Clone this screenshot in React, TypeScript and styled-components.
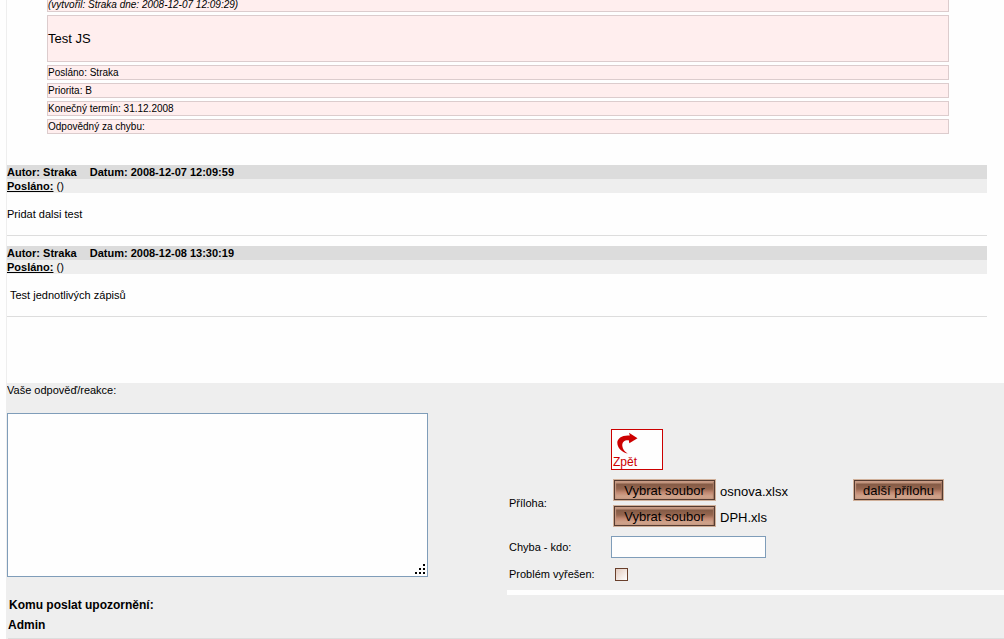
import React from "react";
import styled, { createGlobalStyle } from "styled-components";

const GlobalStyle = createGlobalStyle`
  * { box-sizing: border-box; }
  body {
    margin: 0;
    background: #fefefe;
    color: #000;
    font: 11px/14px "Liberation Sans", Arial, sans-serif;
  }
  button, input, textarea { font: inherit; color: inherit; }
`;

const Page = styled.main`
  margin-left: 6px;
  border-left: 1px solid #eee;
  overflow: hidden;
`;

const Details = styled.section`
  display: flex;
  flex-direction: column;
  gap: 3px;
  margin: -3px 55px 31px 40px;
`;

const DetailBox = styled.div<{ $tall?: boolean; $italic?: boolean }>`
  display: flex;
  align-items: center;
  height: ${(p) => (p.$tall ? 47 : 15)}px;
  border: 1px solid #dccccd;
  background: #ffeeee;
  font-size: ${(p) => (p.$tall ? 13 : 10)}px;
  font-style: ${(p) => (p.$italic ? "italic" : "normal")};
  white-space: pre;
`;

const Entry = styled.article`
  margin: 0 17px 10px 0;
  border-bottom: 1px solid #ddd;
`;

const EntryHead = styled.h2`
  display: flex;
  gap: 13px;
  margin: 0;
  background: #dcdcdc;
  font-size: 11px;
  line-height: 14px;
`;

const Recipients = styled.div`
  background: #eee;
  b { text-decoration: underline; }
`;

const EntryText = styled.p<{ $indent?: boolean }>`
  margin: 0;
  padding: 14px 0 14px ${(p) => (p.$indent ? 3 : 0)}px;
`;

const Form = styled.form`
  margin-top: 66px;
  background: #eee;
`;

const ReplyLabel = styled.label`
  display: block;
  padding-bottom: 16px;
`;

const FormColumns = styled.div`
  display: grid;
  grid-template-columns: 500px 1fr;
`;

const ReplyWrap = styled.div`
  position: relative;
  width: 421px;
  height: 164px;
`;

const Reply = styled.textarea`
  display: block;
  width: 100%;
  height: 100%;
  border: 1px solid #7f9db9;
  border-radius: 0;
  background: #fefefe;
  resize: none;
`;

const Grip = styled.svg`
  position: absolute;
  right: 3px;
  bottom: 3px;
  pointer-events: none;
`;

const Fields = styled.div`
  display: grid;
  grid-template-columns: 102px 1fr;
  row-gap: 9px;
  align-items: center;
  padding: 16px 0 9px 2px;
`;

const BackButton = styled.button`
  grid-column: 2;
  display: flex;
  flex-direction: column;
  justify-content: space-between;
  align-items: flex-start;
  width: 52px;
  height: 41px;
  padding: 2px 0 0 1px;
  border: 1px solid #c00;
  background: #fefefe;
  color: #c00;
  font-size: 12px;
  line-height: 14px;
  svg { margin-left: 3px; }
`;

const Attachments = styled.div`
  display: grid;
  grid-template-columns: 240px 1fr;
  align-items: start;
  padding-left: 2px;
`;

const FileList = styled.div`
  display: flex;
  flex-direction: column;
  gap: 4px;
`;

const FileRow = styled.div`
  display: flex;
  gap: 4px;
  font-size: 13px;
  line-height: 26px;
  height: 22px;
`;

const CopperButton = styled.button<{ $width: number }>`
  width: ${(p) => p.$width}px;
  height: 22px;
  padding: 1px 0 0;
  border: 1px solid #d0b09a;
  background: linear-gradient(#c39780 0, #c39780 12%, #855b46 22%, #96664f 45%, #c08770 62%, #cfa28a 80%, #c99d86 100%);
  box-shadow: inset 0 0 0 1px #553b30, inset 2px 2px 1px #c89b84, inset -2px -1px 1px #a57863;
  font-size: 13px;
  line-height: 19px;
  white-space: nowrap;
`;

const TextField = styled.input`
  width: 155px;
  height: 22px;
  border: 1px solid #7f9db9;
  background: #fefefe;
`;

const Check = styled.input`
  appearance: none;
  width: 13px;
  height: 13px;
  margin: 1px 0 0 4px;
  border: 1px solid #693f2b;
  background: linear-gradient(135deg, #e3cbbf, #fff);
`;

const Divider = styled.hr`
  height: 5px;
  margin: 0;
  border: 0;
  background: #fefefe;
`;

const Notify = styled.section`
  padding-top: 2px;
  border-bottom: 1px solid #ddd;
  margin-left: 1px;
`;

const NotifyLine = styled.h3<{ $title?: boolean }>`
  margin: 0;
  padding-left: ${(p) => (p.$title ? 1 : 0)}px;
  font-size: 12px;
  line-height: ${(p) => (p.$title ? 16 : 25)}px;
`;

const details = ["Posláno: Straka", "Priorita: B", "Konečný termín: 31.12.2008", "Odpovědný za chybu:"];

const entries = [
  { date: "2008-12-07 12:09:59", text: "Pridat dalsi test", indent: false },
  { date: "2008-12-08 13:30:19", text: "Test jednotlivých zápisů", indent: true },
];

export default function App() {
  return (
    <Page>
      <GlobalStyle />
      <Details>
        <DetailBox $italic>(vytvořil: Straka dne: 2008-12-07 12:09:29)</DetailBox>
        <DetailBox $tall>Test JS</DetailBox>
        {details.map((d) => (
          <DetailBox key={d}>{d}</DetailBox>
        ))}
      </Details>
      {entries.map((e) => (
        <Entry key={e.date}>
          <EntryHead>
            <span>Autor: Straka</span>
            <span>Datum: {e.date}</span>
          </EntryHead>
          <Recipients>
            <b>Posláno:</b> ()
          </Recipients>
          <EntryText $indent={e.indent}>{e.text}</EntryText>
        </Entry>
      ))}
      <Form onSubmit={(e) => e.preventDefault()}>
        <ReplyLabel htmlFor="reply">Vaše odpověď/reakce:</ReplyLabel>
        <FormColumns>
          <ReplyWrap>
            <Reply id="reply" />
            <Grip width="10" height="10" shapeRendering="crispEdges">
              <path d="M8 0h2v2h-2zM4 4h2v2h-2zM8 4h2v2h-2zM0 8h2v2h-2zM4 8h2v2h-2zM8 8h2v2h-2z" />
            </Grip>
          </ReplyWrap>
          <div>
            <Fields>
              <BackButton type="button">
                <svg width="24" height="23" viewBox="0 0 24 23" aria-hidden="true">
                  <path
                    d="M13 0.700L21.500 6.200L13.300 11.300L12.800 8.300C8.500 8 6 10 6.300 14C6.700 17.500 8.500 19.500 11.700 21.500C5.500 20.500 1.300 15.500 1.300 10.800C1.300 6 6.500 2.800 13.800 3.500Z"
                    fill="#c00"
                  />
                </svg>
                Zpět
              </BackButton>
              <label htmlFor="file1">Příloha:</label>
              <Attachments>
                <FileList>
                  <FileRow>
                    <CopperButton id="file1" type="button" $width={103}>Vybrat soubor</CopperButton>
                    <span>osnova.xlsx</span>
                  </FileRow>
                  <FileRow>
                    <CopperButton type="button" $width={103}>Vybrat soubor</CopperButton>
                    <span>DPH.xls</span>
                  </FileRow>
                </FileList>
                <CopperButton type="button" $width={91}>další přílohu</CopperButton>
              </Attachments>
              <label htmlFor="who">Chyba - kdo:</label>
              <TextField id="who" type="text" />
              <label htmlFor="solved">Problém vyřešen:</label>
              <Check id="solved" type="checkbox" />
            </Fields>
            <Divider />
          </div>
        </FormColumns>
        <Notify>
          <NotifyLine $title>Komu poslat upozornění:</NotifyLine>
          <NotifyLine>Admin</NotifyLine>
        </Notify>
      </Form>
    </Page>
  );
}
